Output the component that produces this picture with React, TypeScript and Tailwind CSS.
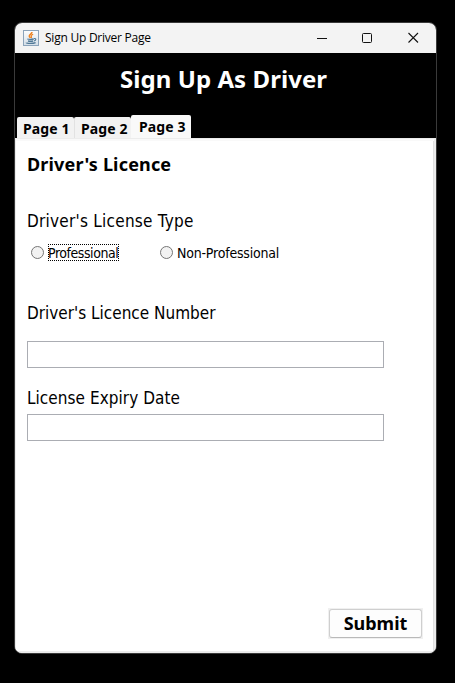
import React from "react";

const regular = "font-['DejaVu_Sans_Condensed','DejaVu_Sans',sans-serif] [font-stretch:condensed]";
const bold = "font-['Noto_Sans','DejaVu_Sans',sans-serif] font-bold [font-stretch:normal]";

function JavaIcon() {
  return (
    <svg width="16" height="16" viewBox="0 0 16 16" fill="none">
      <defs>
        <linearGradient id="frame" x1="0" y1="0" x2="0" y2="1">
          <stop offset="0" stopColor="#fdfdfd" />
          <stop offset="1" stopColor="#d3dee8" />
        </linearGradient>
      </defs>
      <rect x="0.5" y="0.5" width="15" height="15" fill="url(#frame)" stroke="#8ba3ba" />
      <path d="M9 2C9.2 3.8 5.8 4.4 6.3 6.2C6.5 7 7.2 7.4 7.4 8" stroke="#ee8322" strokeWidth="1.5" />
      <path d="M10.2 4.2C8.6 4.8 7.6 5.6 8.4 6.6C8.8 7.2 8.4 7.6 8.1 8" stroke="#ee8322" strokeWidth="1.2" />
      <path d="M4.3 9C5.5 9.4 9 9.4 10.8 9M5 11C6.5 11.3 8.8 11.3 10.2 11" stroke="#507896" strokeWidth="1.3" />
      <path d="M11 8.5C13.6 8.2 13.2 10.4 11 11" stroke="#507896" strokeWidth="1.1" />
      <path d="M3.2 12.6C3 13.6 9.5 13.9 12.6 12.6" stroke="#507896" strokeWidth="1.2" />
    </svg>
  );
}

function TitleBar() {
  return (
    <div className="flex h-[30px] items-center bg-[#f3f3f3] pl-2">
      <JavaIcon />
      <span className="ml-[6px] h-4 whitespace-nowrap font-['Open_Sans','Noto_Sans',sans-serif] text-[12px] leading-4 tracking-[-0.24px] text-black [font-stretch:normal]">
        Sign Up Driver Page
      </span>
      <svg className="ml-auto mr-[17px]" width="103" height="12" viewBox="0 0 103 12" fill="none" stroke="#111">
        <path d="M1 6.5H11" />
        <rect x="46.5" y="1.5" width="9" height="9" rx="1" />
        <path d="M92.5 1L102 10.5M102 1L92.5 10.5" strokeWidth="1.1" />
      </svg>
    </div>
  );
}

function Radio({ label, focused, spacing }: { label: string; focused?: boolean; spacing: string }) {
  return (
    <label className="flex h-[17px] items-center">
      <span className="size-[13px] rounded-full border border-[#757575] bg-[#f2f2f2]" />
      <span
        className={`ml-1 h-[17px] whitespace-nowrap text-[14px] leading-[18px] ${spacing} ${
          focused ? "w-[71px] outline-dotted outline-1 -outline-offset-1 outline-black" : ""
        }`}
      >
        {label}
      </span>
    </label>
  );
}

export default function App() {
  return (
    <div className="h-[683px] w-[455px] overflow-hidden bg-black pl-[14px] pt-[22px]">
      <div className={`flex h-[632px] w-[423px] flex-col overflow-hidden rounded-lg border border-[#3a3a3a] text-black ${regular}`}>
        <TitleBar />
        <div className={`flex h-[85px] flex-col justify-between bg-black ${bold}`}>
          <h1 className="ml-[105px] mt-[10px] h-8 whitespace-nowrap text-[24px] leading-8 tracking-[0.06px] text-white">
            Sign Up As Driver
          </h1>
          <div className="flex items-end pl-[2px] text-[14px] leading-5">
            <div className="h-[21px] w-[57px] whitespace-nowrap rounded-t-[2px] bg-[#f2f2f2] pl-[6px] pt-[2px] tracking-[0.1px]">Page 1</div>
            <div className="h-[21px] w-[57px] whitespace-nowrap rounded-t-[2px] border-l border-[#e2e2e2] bg-[#f2f2f2] pl-[6px] pt-[2px] tracking-[0.1px]">Page 2</div>
            <div className="h-[23px] w-[60px] whitespace-nowrap rounded-t-[2px] bg-[#f9f9f9] pl-[8px] pt-[2px] tracking-[0.1px]">Page 3</div>
          </div>
        </div>
        <div className="flex min-h-0 flex-1 border-b-2 border-l border-r-2 border-t border-[#ececec] bg-[#f9f9f9]">
          <div className="mt-[2px] flex flex-1 flex-col border-r border-[#e0e0e0] bg-white pl-[11px]">
            <h2 className={`mt-[11px] h-6 whitespace-nowrap text-[18px] leading-6 tracking-[0.17px] ${bold}`}>Driver's Licence</h2>
            <p className="mt-[33px] h-6 whitespace-nowrap text-[17px] leading-6 tracking-[0.25px]">Driver's License Type</p>
            <div className="mt-[11px] flex pl-1">
              <div className="w-[129px]">
                <Radio label="Professional" focused spacing="tracking-[-0.45px]" />
              </div>
              <Radio label="Non-Professional" spacing="tracking-[-0.2px]" />
            </div>
            <p className="mt-10 h-6 whitespace-nowrap text-[17px] leading-6">Driver's Licence Number</p>
            <input className="mt-4 h-[27px] w-[357px] border border-[#abadb3] bg-white" />
            <p className="mt-[18px] h-6 whitespace-nowrap text-[17px] leading-6 tracking-[0.05px]">License Expiry Date</p>
            <input className="mt-1 h-[27px] w-[357px] border border-[#abadb3] bg-white" />
            <div className="mt-[167px] flex justify-end pr-[10px]">
              <div className="h-[31px] w-[95px] bg-[#f0f0f0] p-px">
                <button className={`flex h-[29px] w-[93px] items-center justify-center whitespace-nowrap rounded-[3px] border border-[#cfcfcf] border-b-[#b9b9b9] bg-[#fdfdfd] pb-[2px] text-[18px] leading-6 ${bold}`}>
                  Submit
                </button>
              </div>
            </div>
          </div>
        </div>
      </div>
    </div>
  );
}
